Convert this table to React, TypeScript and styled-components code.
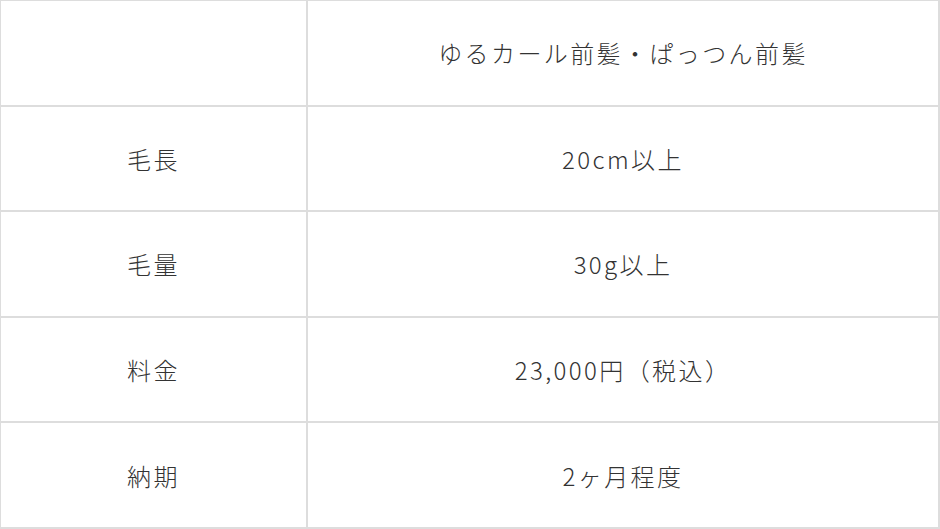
import React from "react";
import styled, { createGlobalStyle } from "styled-components";

const GlobalStyle = createGlobalStyle`
  html, body {
    margin: 0;
    padding: 0;
    background: #fff;
  }
  body {
    font-family: "Noto Sans CJK JP", "Noto Sans", sans-serif;
  }
`;

const Table = styled.table`
  width: 940px;
  height: 529px;
  border-collapse: separate;
  border-spacing: 0;
  border-top: 1px solid #ddd;
  border-left: 1px solid #ddd;
  table-layout: fixed;
`;

const Cell = styled.td<{ $label?: boolean }>`
  width: ${(p) => (p.$label ? "305px" : "auto")};
  border-right: 2px solid #ddd;
  border-bottom: 2px solid #ddd;
  text-align: center;
  vertical-align: middle;
  padding: 0;
  font-size: 24px;
  font-weight: 300;
  letter-spacing: 2.4px;
  color: #333;
`;

const rows: [string, string][] = [
  ["", "ゆるカール前髪・ぱっつん前髪"],
  ["毛長", "20cm以上"],
  ["毛量", "30g以上"],
  ["料金", "23,000円（税込）"],
  ["納期", "2ヶ月程度"],
];

export default function App() {
  return (
    <>
      <GlobalStyle />
      <Table>
        <tbody>
          {rows.map(([label, value], i) => (
            <tr key={i}>
              <Cell $label>{label}</Cell>
              <Cell>{value}</Cell>
            </tr>
          ))}
        </tbody>
      </Table>
    </>
  );
}
